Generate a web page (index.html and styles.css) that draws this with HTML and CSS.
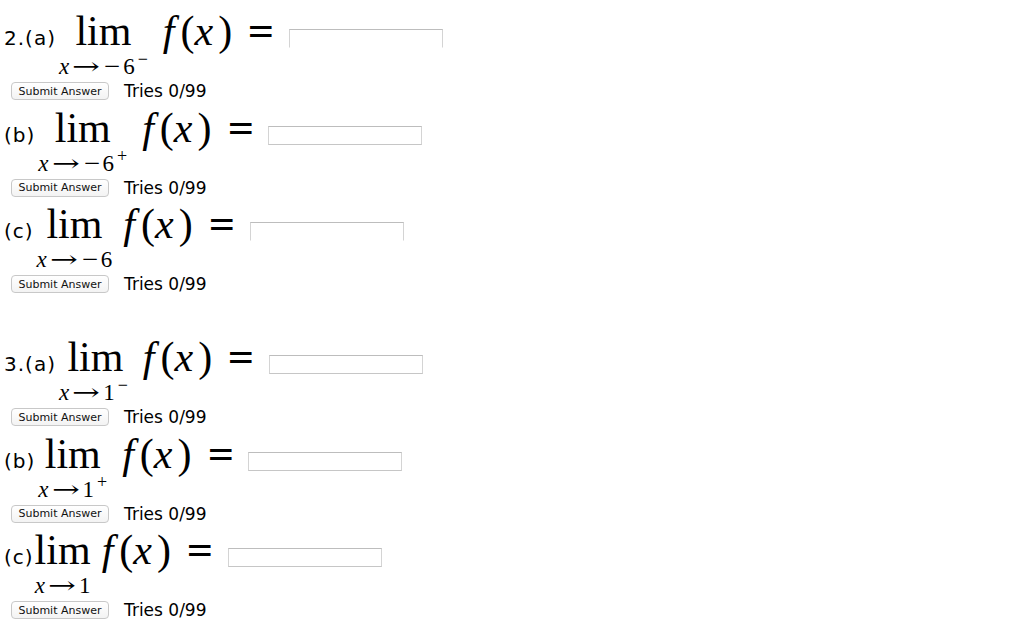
FILE: index.html
```html
<!DOCTYPE html>
<html lang="en">
<head>
<meta charset="utf-8">
<title>Limits</title>
<link rel="stylesheet" href="styles.css">
</head>
<body>
<main class="sheet">
  <section class="problem">
    <div class="part">
      <div class="eq">
        <span class="label">2.(a)</span>
        <span class="op"><span class="lim">lim</span><span class="under"><i>x</i><span class="arrow">→</span><span class="minus">−</span>6<sup class="side">−</sup></span></span>
        <span class="fx"><i class="f">f</i>(<i class="x">x</i>)</span>
        <span class="rel">=</span>
        <input class="answer answer--cut" type="text">
      </div>
      <div class="submit-row"><button class="submit" type="button">Submit Answer</button><span class="tries">Tries 0/99</span></div>
    </div>
    <div class="part">
      <div class="eq">
        <span class="label">(b)</span>
        <span class="op"><span class="lim">lim</span><span class="under"><i>x</i><span class="arrow">→</span><span class="minus">−</span>6<sup class="side">+</sup></span></span>
        <span class="fx"><i class="f">f</i>(<i class="x">x</i>)</span>
        <span class="rel">=</span>
        <input class="answer" type="text">
      </div>
      <div class="submit-row"><button class="submit" type="button">Submit Answer</button><span class="tries">Tries 0/99</span></div>
    </div>
    <div class="part">
      <div class="eq">
        <span class="label">(c)</span>
        <span class="op"><span class="lim">lim</span><span class="under"><i>x</i><span class="arrow">→</span><span class="minus">−</span>6</span></span>
        <span class="fx fx--near"><i class="f">f</i>(<i class="x">x</i>)</span>
        <span class="rel">=</span>
        <input class="answer answer--cut" type="text">
      </div>
      <div class="submit-row"><button class="submit" type="button">Submit Answer</button><span class="tries">Tries 0/99</span></div>
    </div>
  </section>

  <section class="problem">
    <div class="part">
      <div class="eq">
        <span class="label">3.(a)</span>
        <span class="op op--side"><span class="lim">lim</span><span class="under"><i>x</i><span class="arrow">→</span>1<sup class="side">−</sup></span></span>
        <span class="fx fx--near"><i class="f">f</i>(<i class="x">x</i>)</span>
        <span class="rel">=</span>
        <input class="answer" type="text">
      </div>
      <div class="submit-row"><button class="submit" type="button">Submit Answer</button><span class="tries">Tries 0/99</span></div>
    </div>
    <div class="part">
      <div class="eq">
        <span class="label">(b)</span>
        <span class="op"><span class="lim">lim</span><span class="under"><i>x</i><span class="arrow">→</span>1<sup class="side">+</sup></span></span>
        <span class="fx"><i class="f">f</i>(<i class="x">x</i>)</span>
        <span class="rel">=</span>
        <input class="answer" type="text">
      </div>
      <div class="submit-row"><button class="submit" type="button">Submit Answer</button><span class="tries">Tries 0/99</span></div>
    </div>
    <div class="part">
      <div class="eq">
        <span class="label">(c)</span>
        <span class="op op--snug"><span class="lim">lim</span><span class="under"><i>x</i><span class="arrow">→</span>1</span></span>
        <span class="fx fx--near"><i class="f">f</i>(<i class="x">x</i>)</span>
        <span class="rel">=</span>
        <input class="answer" type="text">
      </div>
      <div class="submit-row"><button class="submit" type="button">Submit Answer</button><span class="tries">Tries 0/99</span></div>
    </div>
  </section>
</main>
</body>
</html>
```

FILE: styles.css
```css
html, body {
  margin: 0;
  background: #fff;
  color: #000;
}

body {
  font-family: "DejaVu Sans", Verdana, sans-serif;
}

.sheet {
  padding-top: 14px;
}

.problem + .problem {
  margin-top: 46px;
}

.part + .part {
  margin-top: 9.5px;
}

/* equation line: label, limit operator, f(x) = [answer] */
.eq {
  display: flex;
  align-items: baseline;
}

.label {
  font-size: 20px;
  letter-spacing: 1px;
  margin-left: 4px;
  margin-right: 2px;
}

/* \lim with its subscript stacked underneath */
.op {
  display: inline-flex;
  flex-direction: column;
  align-items: center;
  font-family: "Liberation Serif", "Times New Roman", serif;
  margin-left: 1px;
}

.op--side .under {
  padding-right: 4px;
}

.op--snug {
  margin-left: -1px;
}

.lim {
  font-size: 42px;
  line-height: 34px;
}

.under {
  font-size: 23px;
  line-height: 26px;
  margin-top: 5px;
  white-space: nowrap;
}

.under i {
  margin-right: 3px;
}

.arrow {
  display: inline-block;
  width: 28px;
  text-align: center;
  font-family: "DejaVu Serif", serif;
  transform: scaleX(1.45);
  margin-right: 3px;
}

.minus {
  display: inline-block;
  width: 18px;
  text-align: center;
  transform: scaleX(1.25);
  margin-right: 2px;
}

.side {
  font-size: 18px;
  line-height: 0;
  vertical-align: 9px;
  margin-left: 3px;
}

.fx {
  font-family: "Liberation Serif", "Times New Roman", serif;
  font-size: 42px;
  line-height: 34px;
  margin-left: 15px;
}

.fx--near {
  margin-left: 11px;
}

.f {
  margin-right: 6px;
}

.x {
  margin-right: 5px;
}

.rel {
  display: inline-block;
  font-family: "Liberation Serif", "Times New Roman", serif;
  font-weight: bold;
  font-size: 42px;
  line-height: 34px;
  margin-left: 17px;
  margin-right: 2px;
  transform: scaleX(1.1);
}

.answer {
  align-self: flex-start;
  width: 154px;
  height: 19px;
  box-sizing: border-box;
  margin: 15px 0 0 14px;
  padding: 0;
  border: 1px solid #d4d4d4;
  border-top-color: #bdbdbd;
  border-bottom-color: #c6c6c6;
  background: #fff;
}

.answer--cut {
  border-bottom-color: transparent;
}

.submit-row {
  display: flex;
  align-items: center;
  margin-top: 1px;
  margin-left: 11px;
}

.submit {
  width: 98px;
  height: 18px;
  padding: 0;
  font-family: "DejaVu Sans", Verdana, sans-serif;
  font-size: 11px;
  color: #111;
  background: linear-gradient(#ffffff, #f3f3f3);
  border: 1px solid #c8c8c8;
  border-radius: 4px;
}

.tries {
  font-size: 17px;
  margin-left: 15px;
}
```
